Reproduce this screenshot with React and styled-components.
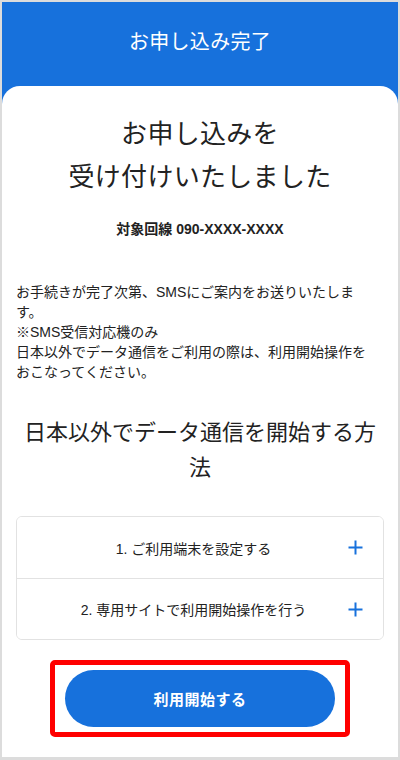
import React from 'react';
import styled, { createGlobalStyle } from 'styled-components';

const GlobalStyle = createGlobalStyle`
  html, body {
    margin: 0;
    padding: 0;
    background: #ffffff;
  }
  body {
    font-family: "Liberation Sans", "Noto Sans CJK JP", sans-serif;
    color: #222222;
  }
  * {
    box-sizing: border-box;
  }
`;

const Frame = styled.div`
  width: 400px;
  height: 760px;
  border: 2px solid #dcdcdc;
  border-bottom-width: 3px;
  background: #1771dc;
  display: flex;
  flex-direction: column;
  overflow: hidden;
`;

const Header = styled.header`
  height: 84px;
  flex-shrink: 0;
  display: flex;
  align-items: center;
  justify-content: center;
  padding-bottom: 8px;
  color: #ffffff;
  font-size: 20px;
  letter-spacing: 0.3px;
`;

const Card = styled.main`
  flex: 1;
  background: #ffffff;
  border-radius: 18px 18px 0 0;
  padding: 27px 14px 0;
  display: flex;
  flex-direction: column;
  align-items: stretch;
`;

const Title = styled.h1`
  margin: 0;
  font-size: 26px;
  font-weight: normal;
  line-height: 43px;
  text-align: center;
  letter-spacing: 0.3px;
  color: #222;
`;

const LineInfo = styled.p`
  margin: 20px 0 0;
  font-size: 14px;
  font-weight: bold;
  line-height: 20px;
  text-align: center;
`;

const Notice = styled.p`
  margin: 43px 0 0;
  width: 354px;
  font-size: 14px;
  line-height: 20px;
  color: #222;
`;

const SectionTitle = styled.h2`
  margin: 33px 0 0;
  font-size: 22px;
  font-weight: normal;
  line-height: 35px;
  text-align: center;
  color: #222;
`;

const Accordion = styled.div`
  margin-top: 31px;
  border: 1px solid #e2e2e2;
  border-radius: 6px;
  overflow: hidden;
`;

const Row = styled.button`
  width: 100%;
  height: 61px;
  display: flex;
  align-items: center;
  padding: 0 20px 0 30px;
  border: none;
  border-top: ${(p) => (p.$first ? 'none' : '1px solid #e2e2e2')};
  background: #ffffff;
  font-family: inherit;
  font-size: 14px;
  color: #222;
  cursor: pointer;
`;

const RowLabel = styled.span`
  flex: 1;
  text-align: center;
`;

const PlusIcon = styled.svg`
  width: 15px;
  height: 15px;
  margin-left: 8px;
  flex-shrink: 0;
`;

const Highlight = styled.div`
  align-self: center;
  margin-top: 20px;
  border: 5px solid #ff0000;
  border-radius: 5px;
  padding: 5px 10px;
`;

const PrimaryButton = styled.button`
  width: 270px;
  height: 57px;
  border: none;
  border-radius: 29px;
  background: #1771dc;
  color: #ffffff;
  font-family: inherit;
  font-size: 15px;
  font-weight: bold;
  letter-spacing: 0.5px;
  cursor: pointer;
`;

function Plus() {
  return (
    <PlusIcon viewBox="0 0 15 15">
      <path d="M7.5 0.5v14M0.5 7.5h14" stroke="#1771dc" strokeWidth="2" fill="none" />
    </PlusIcon>
  );
}

const steps = ['1. ご利用端末を設定する', '2. 専用サイトで利用開始操作を行う'];

export default function App() {
  return (
    <>
      <GlobalStyle />
      <Frame>
        <Header>お申し込み完了</Header>
        <Card>
          <Title>
            お申し込みを
            <br />
            受け付けいたしました
          </Title>
          <LineInfo>対象回線 090-XXXX-XXXX</LineInfo>
          <Notice>
            お手続きが完了次第、SMSにご案内をお送りいたします。
            <br />
            ※SMS受信対応機のみ
            <br />
            日本以外でデータ通信をご利用の際は、利用開始操作をおこなってください。
          </Notice>
          <SectionTitle>日本以外でデータ通信を開始する方法</SectionTitle>
          <Accordion>
            {steps.map((s, i) => (
              <Row key={s} $first={i === 0}>
                <RowLabel>{s}</RowLabel>
                <Plus />
              </Row>
            ))}
          </Accordion>
          <Highlight>
            <PrimaryButton>利用開始する</PrimaryButton>
          </Highlight>
        </Card>
      </Frame>
    </>
  );
}
